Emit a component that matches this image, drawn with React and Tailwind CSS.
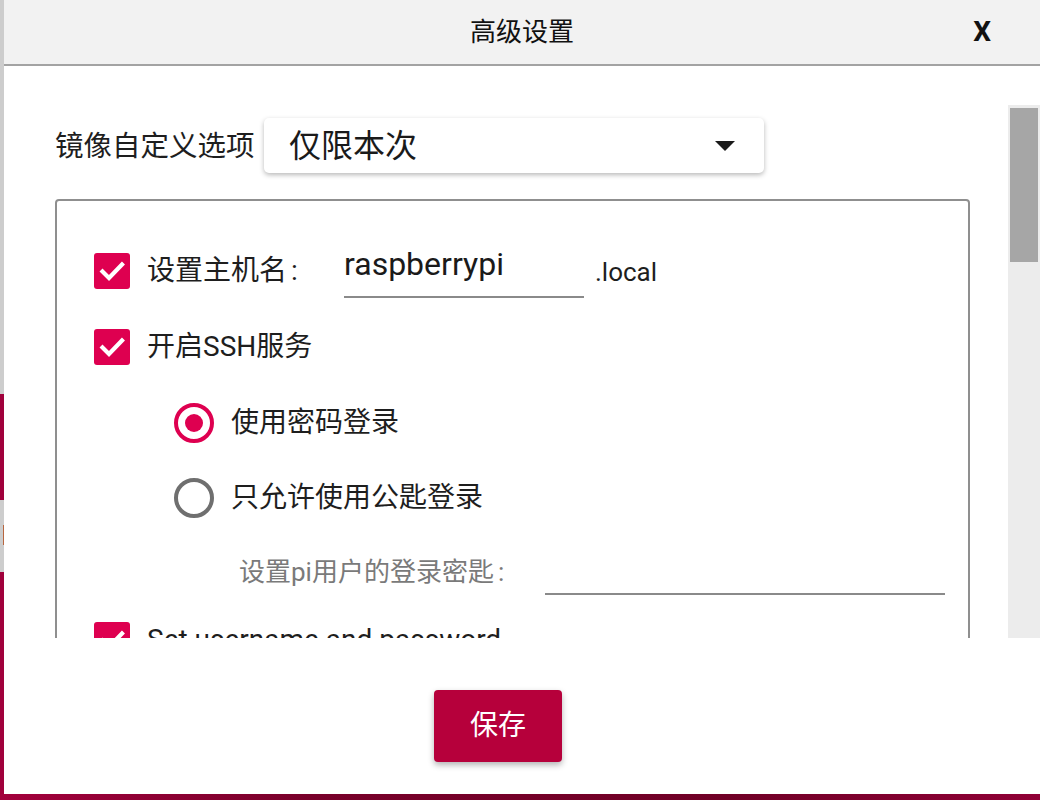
import React from "react";

const font = "font-['Roboto','Noto_Sans_CJK_SC',sans-serif]";

function Check() {
  return (
    <div className="w-[36px] h-[36px] rounded-[3px] bg-[#de0050] flex items-center justify-center shrink-0">
      <svg width="36" height="36" viewBox="0 0 36 36">
        <path d="M8.5 18.5 L15 25 L28 11.5" fill="none" stroke="#fff" strokeWidth="4.2" strokeLinecap="square" />
      </svg>
    </div>
  );
}

function Radio({ on }) {
  return (
    <div
      className={
        on
          ? "w-[40px] h-[40px] rounded-full border-[4px] border-[#de0050] flex items-center justify-center shrink-0"
          : "w-[40px] h-[40px] rounded-full border-[4px] border-[#6f6f6f] shrink-0"
      }
    >
      {on && <div className="w-[18px] h-[18px] rounded-full bg-[#de0050]" />}
    </div>
  );
}

export default function App() {
  return (
    <div className={`w-[1040px] h-[800px] overflow-hidden flex flex-col ${font} text-[#1e1e1e]`}>
      <div className="flex h-[794px]">
        {/* left strip of background */}
        <div className="w-[4px] flex flex-col">
          <div className="h-[394px] bg-[#cdcdcd]" />
          <div className="h-[106px] bg-[#a0003b]" />
          <div className="h-[72px] bg-[#cdcdcd] flex flex-col">
            <div className="h-[25px]" />
            <div className="h-[20px] w-[1px] ml-[3px] bg-[#b8663f]" />
          </div>
          <div className="flex-1 bg-[#a0003b]" />
        </div>
        {/* dialog */}
        <div className="flex-1 bg-white rounded-bl-[5px] flex flex-col">
          <div className="h-[66px] bg-[#f2f2f2] border-b-2 border-[#a3a3a3] grid grid-cols-[1fr_auto_1fr] items-center">
            <div />
            <div className="text-[26px] leading-[30px] text-[#111] pb-[1px]">高级设置</div>
            <div className="flex justify-end pr-[49px]">
              <span className="text-[28px] font-bold leading-[30px] text-[#111] font-['Roboto',sans-serif]">X</span>
            </div>
          </div>

          <div className="pt-[39px] flex h-[572px]">
            <div className="flex-1 overflow-hidden h-[533px] pl-[51px] pt-[13px]">
              <div className="flex items-center">
                <div className="text-[28.5px] leading-[36px] w-[209px] pt-[3px]">镜像自定义选项</div>
                <div className="w-[500px] h-[55px] bg-white rounded-[5px] shadow-[0_2px_5px_rgba(0,0,0,0.28)] flex items-center justify-between pl-[25px] pr-[29px]">
                  <span className="text-[32px] leading-[40px] text-[#1a1a1a]">仅限本次</span>
                  <svg width="20" height="10" viewBox="0 0 20 10">
                    <path d="M0 0 L20 0 L10 10 Z" fill="#1a1a1a" />
                  </svg>
                </div>
              </div>

              <div className="mt-[26px] w-[915px] border-2 border-[#8f8f8f] rounded-[4px] pt-[31px] pl-[37px] pr-[23px] h-[600px]">
                <div className="h-[77px] flex items-center">
                  <Check />
                  <div className="ml-[17px] w-[197px] text-[28px] leading-[36px] whitespace-nowrap">设置主机名<span className="ml-[4px]">:</span></div>
                  <div className="w-[240px] h-[54px] border-b-2 border-[#8a8a8a] text-[32px] leading-[40px] text-[#1a1a1a]">raspberrypi</div>
                  <div className="ml-[11px] text-[26px] leading-[36px] pt-[2px]">.local</div>
                </div>
                <div className="h-[76px] flex items-center">
                  <Check />
                  <div className="ml-[17px] text-[28px] leading-[36px]">开启SSH服务</div>
                </div>
                <div className="h-[75px] flex items-center pl-[80px]">
                  <Radio on />
                  <div className="ml-[17px] text-[28px] leading-[36px]">使用密码登录</div>
                </div>
                <div className="h-[76px] flex items-center pl-[80px]">
                  <Radio />
                  <div className="ml-[17px] text-[28px] leading-[36px]">只允许使用公匙登录</div>
                </div>
                <div className="h-[72px] flex items-center pl-[145px]">
                  <div className="w-[306px] text-[26px] leading-[32px] text-[#7a7a7a] whitespace-nowrap">设置pi用户的登录密匙<span className="ml-[4px]">:</span></div>
                  <div className="w-[400px] h-[46px] border-b-2 border-[#8a8a8a]" />
                </div>
                <div className="h-[64px] flex items-center">
                  <Check />
                  <div className="ml-[17px] text-[28px] leading-[36px]">Set username and password</div>
                </div>
              </div>
            </div>
            <div className="w-[32px] h-[533px] bg-[#ececec] pt-[3px] pl-[2px] pr-[2px]">
              <div className="h-[154px] bg-[#a6a6a6]" />
            </div>
          </div>

          <div className="pt-[52px] pl-[430px]">
            <div className="w-[128px] h-[72px] rounded-[4px] bg-[#b6003b] shadow-[0_3px_6px_rgba(0,0,0,0.3)] flex items-center justify-center text-white text-[28px] leading-[36px]">
              保存
            </div>
          </div>
        </div>
      </div>
      <div className="h-[6px] bg-[linear-gradient(90deg,#a3003c_0%,#78002a_30%,#700026_70%,#900036_100%)]" />
    </div>
  );
}
